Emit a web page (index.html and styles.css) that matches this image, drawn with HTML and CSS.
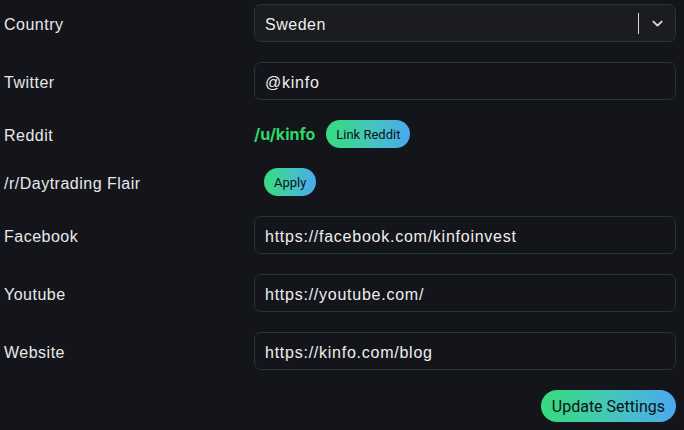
FILE: index.html
```html
<!DOCTYPE html>
<html lang="en">
<head>
    <meta charset="UTF-8">
    <meta name="viewport" content="width=device-width, initial-scale=1.0">
    <title>Settings</title>
    <link rel="stylesheet" href="styles.css">
</head>
<body>
    <form action="#" class="settings">
        <!-- Country -->
        <div class="row">
            <label class="label">Country</label>
            <div class="select">
                <span class="select-value">Sweden</span>
                <span class="select-sep"></span>
                <span class="select-arrow">
                    <svg width="15" height="15" viewBox="0 0 20 20"><path d="M4.5 7.5 L10 12.8 L15.5 7.5" fill="none" stroke="#d8d8d8" stroke-width="2.6" stroke-linecap="round" stroke-linejoin="round"/></svg>
                </span>
            </div>
        </div>

        <div class="row">
            <label class="label" for="twitter">Twitter</label>
            <input class="field" id="twitter" type="text" value="@kinfo">
        </div>

        <div class="row row-small">
            <span class="label">Reddit</span>
            <div class="inline">
                <span class="reddit-user">/u/kinfo</span>
                <button type="button" class="btn btn-small">Link Reddit</button>
            </div>
        </div>

        <div class="row row-small">
            <span class="label">/r/Daytrading Flair</span>
            <div class="inline indent">
                <button type="button" class="btn btn-small">Apply</button>
            </div>
        </div>

        <div class="row">
            <label class="label" for="facebook">Facebook</label>
            <input class="field" id="facebook" type="text" value="https://facebook.com/kinfoinvest">
        </div>

        <div class="row">
            <label class="label" for="youtube">Youtube</label>
            <input class="field" id="youtube" type="text" value="https://youtube.com/">
        </div>

        <div class="row">
            <label class="label" for="website">Website</label>
            <input class="field" id="website" type="text" value="https://kinfo.com/blog">
        </div>

        <div class="actions">
            <button type="submit" class="btn btn-large">Update Settings</button>
        </div>
    </form>
</body>
</html>
```

FILE: styles.css
```css
body {
    margin: 0;
    background: #14151b;
    color: #e8e8ea;
    font-family: 'Liberation Sans', Arial, sans-serif;
    font-size: 16px;
}

.settings {
    display: flex;
    flex-direction: column;
    gap: 20px;
    padding: 4px 8px 0 4px;
}

.row {
    display: grid;
    grid-template-columns: 250px 1fr;
    align-items: center;
    height: 38px;
}

.row-small {
    height: 28px;
}

.label {
    color: #e8e8ea;
    letter-spacing: 0.5px;
    padding-top: 3px;
}

.field,
.select {
    box-sizing: border-box;
    width: 100%;
    height: 38px;
    border: 1px solid #1f3b2b;
    border-radius: 7px;
    background: #14151b;
    color: #eeeeee;
    font-family: 'Liberation Sans', Arial, sans-serif;
    font-size: 16px;
    letter-spacing: 0.75px;
    padding: 3px 10px 0;
}

.field:focus {
    outline: none;
}

.select {
    display: flex;
    align-items: center;
    background: #1b1c1f;
    padding: 0 0 0 10px;
    letter-spacing: 0.5px;
}

.select-value {
    flex: 1;
    padding-top: 3px;
}

.select-sep {
    width: 1px;
    height: 21px;
    background: #d8d8d8;
}

.select-arrow {
    display: flex;
    align-items: center;
    justify-content: center;
    width: 36px;
}

.inline {
    display: flex;
    align-items: center;
    gap: 11px;
}

.indent {
    padding-left: 10px;
}

.reddit-user {
    color: #2fd868;
    font-family: Inter, 'Noto Sans', sans-serif;
    font-weight: 700;
    font-size: 16px;
}

.btn {
    border: none;
    background: linear-gradient(90deg, #35dc7c 0%, #45c7b8 50%, #4aa9ef 100%);
    color: #101114;
    font-family: Roboto, 'Noto Sans', sans-serif;
    cursor: pointer;
}

.btn-small {
    height: 28px;
    padding: 0 10px;
    font-size: 13px;
    border-radius: 14px;
}

.btn-large {
    height: 32px;
    padding: 0 11px;
    font-size: 16px;
    border-radius: 16px;
}

.actions {
    display: flex;
    justify-content: flex-end;
}
```
